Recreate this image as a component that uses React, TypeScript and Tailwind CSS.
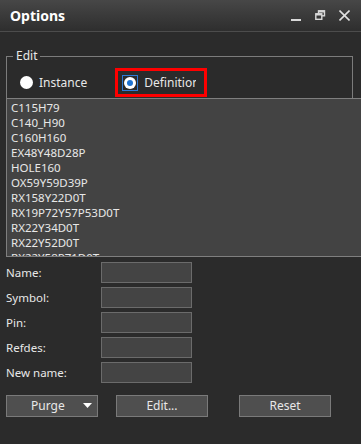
import React from "react";

const items = [
  "C115H79",
  "C140_H90",
  "C160H160",
  "EX48Y48D28P",
  "HOLE160",
  "OX59Y59D39P",
  "RX158Y22D0T",
  "RX19P72Y57P53D0T",
  "RX22Y34D0T",
  "RX22Y52D0T",
  "RX22Y58P71D0T",
];

const fields = ["Name:", "Symbol:", "Pin:", "Refdes:", "New name:"];

export default function App() {
  return (
    <div
      className="w-[361px] h-[444px] bg-[#2b2b2b] text-[11.5px] text-[#e8e8e8] overflow-hidden flex flex-col"
      style={{ fontFamily: '"Noto Sans", "Open Sans", sans-serif' }}
    >
      {/* Title bar */}
      <div className="h-[32px] shrink-0 flex items-center pl-[10px] pr-[11px] bg-gradient-to-b from-[#474747] to-[#2e2e2e] border-b border-[#4c4c4c]">
        <span className="text-[14px] font-bold text-white leading-none pt-[1px]">Options</span>
        <div className="ml-auto flex items-center gap-[13px]">
          <svg width="11" height="12" viewBox="0 0 11 12">
            <rect x="0" y="9" width="10" height="2" fill="#d8d8d8" />
          </svg>
          <svg width="11" height="11" viewBox="0 0 11 11" fill="none" stroke="#d8d8d8" strokeWidth="1.4">
            <rect x="3.5" y="0.8" width="6" height="5" />
            <rect x="0.8" y="3.8" width="6" height="5.5" fill="#363636" />
            <line x1="0.8" y1="4.5" x2="6.8" y2="4.5" strokeWidth="2" />
            <line x1="3.5" y1="1.5" x2="9.5" y2="1.5" strokeWidth="2" />
          </svg>
          <svg width="11" height="11" viewBox="0 0 11 11" stroke="#e0e0e0" strokeWidth="1.6">
            <line x1="0.5" y1="0.5" x2="10.5" y2="10.5" />
            <line x1="10.5" y1="0.5" x2="0.5" y2="10.5" />
          </svg>
        </div>
      </div>

      {/* Group box */}
      <div className="relative mt-[24px] ml-[6px] w-[347px] h-[42px] shrink-0 border-t border-l border-r border-[#7c7c7c]">
        <span className="absolute left-[6px] top-[-9px] px-[3px] bg-[#2b2b2b] leading-[16px] text-[12px]">Edit</span>
        <div className="flex items-center h-full pt-[10px]">
          <div className="ml-[13px] w-[13px] h-[13px] rounded-full bg-white" />
          <span className="ml-[6px] text-[12px]">Instance</span>
          <div className="ml-[28px] w-[92px] h-[29px] border-[3px] border-[#ff0000] flex items-center pl-[4px]">
            <div className="w-[16px] h-[16px] border border-[#2e7bd6] flex items-center justify-center">
              <div className="w-[12px] h-[12px] rounded-full bg-white flex items-center justify-center">
                <div className="w-[6px] h-[6px] rounded-full bg-[#1e73d2]" />
              </div>
            </div>
            <span className="ml-[6px] w-[52px] overflow-hidden whitespace-nowrap text-[12px]">Definition</span>
          </div>
        </div>
      </div>

      {/* List */}
      <div className="ml-[6px] w-[360px] h-[159px] shrink-0 bg-[#434343] border border-[#7f7f7f] overflow-hidden pt-[1px]">
        {items.map((t) => (
          <div key={t} className="h-[15px] leading-[15px] pl-[4px] whitespace-nowrap">
            {t}
          </div>
        ))}
      </div>

      {/* Fields */}
      <div className="mt-[5px] flex flex-col gap-[4px] pl-[6px]">
        {fields.map((f) => (
          <div key={f} className="flex items-center h-[21px]">
            <span className="w-[95px]">{f}</span>
            <div className="w-[91px] h-[21px] bg-[#444444] border border-[#6b6b6b]" />
          </div>
        ))}
      </div>

      {/* Buttons */}
      <div className="mt-[12px] flex pl-[6px] text-[12px]">
        <div className="w-[92px] h-[22px] bg-[#4f4f4f] border border-[#7a7a7a] relative flex items-center">
          <span className="ml-[24px]">Purge</span>
          <svg className="absolute right-[5px] top-[7px]" width="9" height="6" viewBox="0 0 9 6">
            <polygon points="0,0 9,0 4.5,5" fill="#ffffff" />
          </svg>
        </div>
        <div className="ml-[18px] w-[92px] h-[22px] bg-[#4f4f4f] border border-[#7a7a7a] flex items-center justify-center">
          Edit...
        </div>
        <div className="ml-[31px] w-[92px] h-[22px] bg-[#4f4f4f] border border-[#7a7a7a] flex items-center justify-center">
          Reset
        </div>
      </div>
    </div>
  );
}
